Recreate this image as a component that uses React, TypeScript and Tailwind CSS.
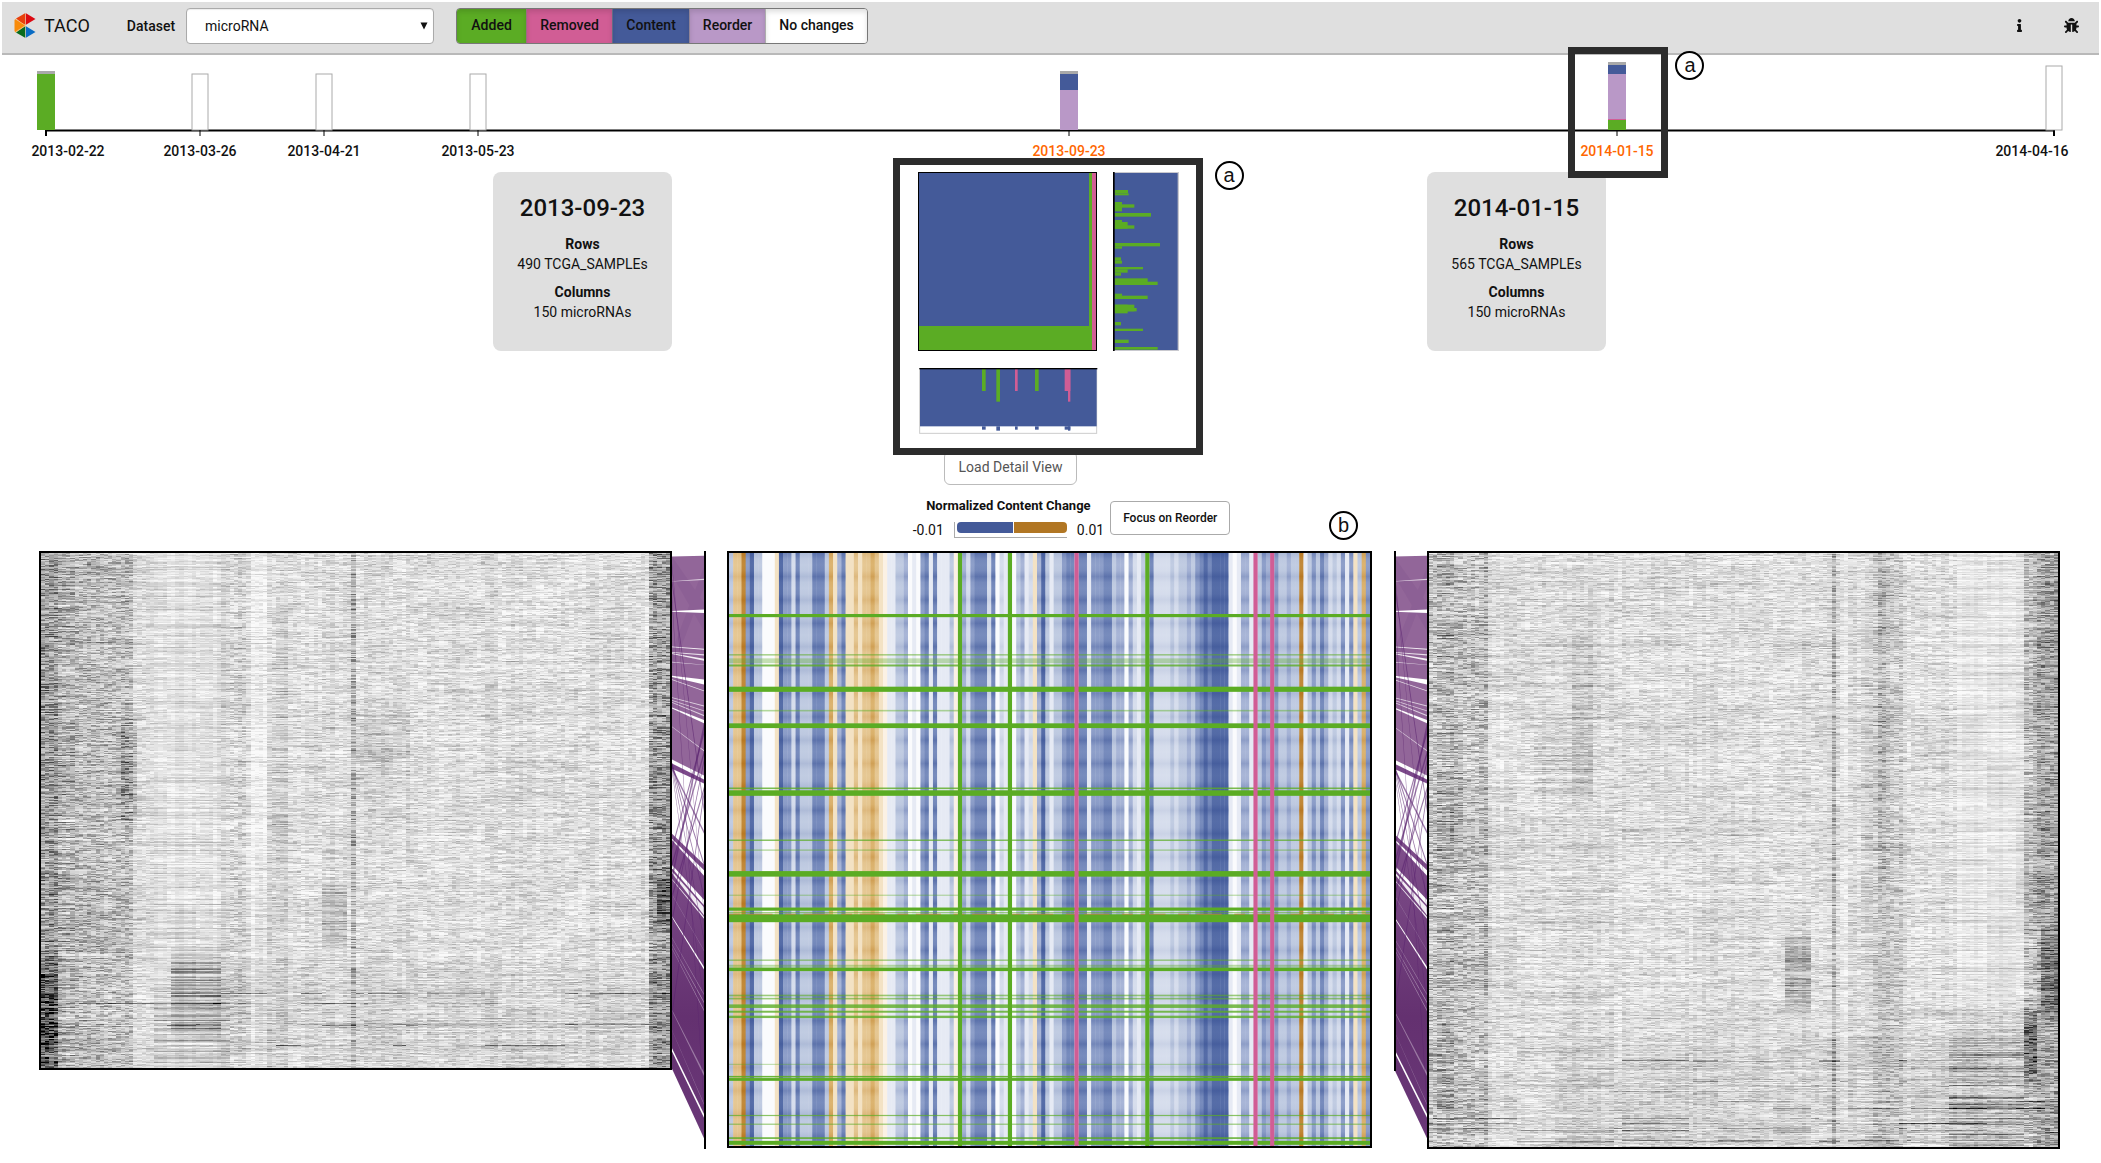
import { useLayoutEffect, useRef } from "react";
import { FaBug, FaInfo } from "react-icons/fa";

const GREEN = "#5bac24";
const PINK = "#d15d95";
const BLUE = "#445a99";
const PURPLE = "#b998c7";

/* ---------- Header ---------- */

function Logo() {
  return (
    <svg width="22" height="26" viewBox="0 0 22 26" aria-hidden="true">
      <path d="M11.500 0 L2 5.500 L8 10.500 L11.500 12 Z" fill="#e8400c" />
      <path d="M11.500 0 L21.500 6 L11.500 12 Z" fill="#dc0a12" />
      <path d="M0.500 7 L1.500 6 L11.500 12 L11.500 13 L1.500 19.500 L0.500 18 Z" fill="#f98b0a" />
      <path d="M11.500 13 L11.500 25 L2 19.500 Z" fill="#0a6b1c" />
      <path d="M11.500 13 L21.500 19 L11.500 25 Z" fill="#0a6cc4" />
      <path d="M11.500 0 V25 M1.500 6 L11.500 12.500 L1.500 19" stroke="#f3d9b0" strokeWidth="0.600" fill="none" />
    </svg>
  );
}

const FILTERS = [
  { label: "Added", style: "w-[69px] bg-[#5bac24]" },
  { label: "Removed", style: "w-[86px] bg-[#d15d95]" },
  { label: "Content", style: "w-[77px] bg-[#445a99]" },
  { label: "Reorder", style: "w-[76px] bg-[#b998c7]" },
  { label: "No changes", style: "w-[102px] bg-white" },
];

function Header() {
  return (
    <header className="flex h-[53px] items-center border-b-2 border-[#b9b9b9] bg-[#dfdfdf] pr-5 pb-1 pl-3">
      <a href="#home" className="flex items-center gap-2 text-lg">
        <Logo />
        TACO
      </a>
      <label htmlFor="dataset" className="ml-[37px] font-medium">
        Dataset
      </label>
      <div className="relative ml-[11px]">
        <select
          id="dataset"
          className="h-9 w-[248px] appearance-none rounded border border-[#aaa] bg-white pl-[18px] text-sm shadow-[inset_0_1px_1px_rgba(0,0,0,0.08)]"
        >
          <option>microRNA</option>
        </select>
        <svg className="pointer-events-none absolute top-3.5 right-1.5" width="8" height="8" viewBox="0 0 8 8" aria-hidden="true">
          <path d="M0.500 0.500 H7.500 L4 7.500 Z" fill="#111" />
        </svg>
      </div>
      <div className="ml-[22px] flex h-9 overflow-hidden rounded border border-[#777] font-medium">
        {FILTERS.map((f, i) => (
          <button
            key={f.label}
            type="button"
            className={`${f.style} ${i > 0 ? "border-l border-[#7779]" : ""} pb-px shadow-[inset_0_3px_5px_rgba(0,0,0,0.125)]`}
          >
            {f.label}
          </button>
        ))}
      </div>
      <nav className="ml-auto flex items-center gap-9">
        <button type="button" aria-label="Information" className="flex w-4 justify-center">
          <FaInfo size={13} />
        </button>
        <button type="button" aria-label="Report a bug" className="flex w-4 justify-center">
          <FaBug size={15} />
        </button>
      </nav>
    </header>
  );
}

/* ---------- Timeline ---------- */

type Seg = [number, number, string];
type Stop = { date: string; x: number; label: number; active?: boolean; top: number; segs: Seg[] };

const STOPS: Stop[] = [
  { date: "2013-02-22", x: 46, label: 68, top: 71, segs: [[71, 74, "#a9a9a9"], [74, 130, GREEN]] },
  { date: "2013-03-26", x: 200, label: 200, top: 74, segs: [] },
  { date: "2013-04-21", x: 324, label: 324, top: 74, segs: [] },
  { date: "2013-05-23", x: 478, label: 478, top: 74, segs: [] },
  { date: "2013-09-23", x: 1069, label: 1069, active: true, top: 71, segs: [[71, 74, "#a9a9a9"], [74, 90, BLUE], [90, 130, PURPLE]] },
  {
    date: "2014-01-15", x: 1617, label: 1617, active: true, top: 62,
    segs: [[62, 65, "#a9a9a9"], [65, 74, BLUE], [74, 119, PURPLE], [119, 120, PINK], [120, 130, GREEN]],
  },
  { date: "2014-04-16", x: 2054, label: 2032, top: 66, segs: [] },
];

function Timeline() {
  return (
    <section className="relative" aria-label="Timeline">
      <svg viewBox="2 55 2097 103" className="block w-full">
        <path d="M46 136 V130.500 H2054 V136" fill="none" stroke="#000" strokeWidth="2" />
        {STOPS.map((s) => (
          <g key={s.date}>
            {s.segs.length === 0 && (
              <rect x={s.x - 8} y={s.top} width="16" height={130 - s.top} fill="#fff" stroke="#aaa" strokeWidth="1" />
            )}
            {s.segs.map(([a, b, c]) => (
              <rect key={a} x={s.x - 9} y={a} width="18" height={b - a} fill={c} />
            ))}
            <path d={`M${s.x} 130 V136`} stroke="#000" strokeWidth="1" />
            <text x={s.label} y="156" textAnchor="middle" fontSize="14" fontWeight="500" fill={s.active ? "#ff6600" : "#111"}>
              {s.date}
            </text>
          </g>
        ))}
      </svg>
      <div className="pointer-events-none absolute -top-2 left-[74.700%] z-10 h-[131px] w-[100px] border-[7px] border-[#2c2c2c]">
        <Marker letter="a" place="top-[-3px] left-[100px]" />
      </div>
    </section>
  );
}

function Marker({ letter, place }: { letter: string; place: string }) {
  return (
    <span
      className={`${place} absolute flex size-[29px] items-center justify-center rounded-full border-2 border-black bg-white pb-0.5 font-['Liberation_Sans',sans-serif] text-xl leading-none`}
    >
      {letter}
    </span>
  );
}

/* ---------- Version cards ---------- */

function VersionCard({ date, rows, columns }: { date: string; rows: string; columns: string }) {
  return (
    <article className="mt-3.5 h-[179px] w-[179px] rounded-lg bg-[#dfdfdf] pt-5 text-center leading-5">
      <h2 className="mb-2.5 text-2xl leading-8 font-medium">{date}</h2>
      <h3 className="font-bold">Rows</h3>
      <p className="mb-2">{rows}</p>
      <h3 className="font-bold">Columns</h3>
      <p>{columns}</p>
    </article>
  );
}

/* ---------- Change overview ---------- */

/* [y, height, length] in thirds of a pixel */
const ROW_BARS = [
  [54, 10, 40], [64, 6, 42], [90, 28, 22], [97, 10, 59], [123, 11, 109], [144, 26, 22], [150, 20, 39], [160, 10, 59],
  [213, 10, 136], [223, 7, 22], [256, 10, 19], [266, 9, 22], [285, 7, 85], [292, 10, 39], [302, 9, 19], [319, 20, 99],
  [329, 10, 129], [365, 16, 22], [371, 10, 99], [398, 26, 39], [398, 20, 59], [408, 10, 66], [450, 10, 19], [470, 7, 85],
  [503, 10, 42], [525, 8, 129],
];

const COL_BARS: [number, number, number, string][] = [
  [186, 11, 66, GREEN], [229, 11, 98, GREEN], [285, 8, 66, PINK], [345, 11, 66, GREEN], [434, 17, 66, PINK], [444, 7, 98, PINK],
];

function Overview() {
  return (
    <div className="relative z-10 mr-1 h-[297px] w-[310px] border-[7px] border-[#2c2c2c] bg-white pt-[7px] pl-[18px]">
      <div className="grid grid-cols-[179px_66px] gap-x-4 gap-y-[17px]">
        <svg width="179" height="179" aria-label="Change matrix">
          <rect x="0" y="0" width="179" height="179" fill={BLUE} />
          <rect x="1" y="154" width="173" height="24" fill={GREEN} />
          <rect x="171" y="1" width="3" height="177" fill={GREEN} />
          <rect x="174" y="1" width="4" height="177" fill={PINK} />
          <rect x="0.500" y="0.500" width="178" height="178" fill="none" stroke="#000" />
        </svg>
        <svg width="66" height="179" viewBox="0 0 198 537" aria-label="Changes per row">
          <rect x="0" y="0" width="198" height="537" fill="#c9c9cf" />
          <rect x="0" y="3" width="194" height="531" fill={BLUE} />
          {ROW_BARS.map(([y, h, w], i) => (
            <rect key={i} x="5" y={y} width={w} height={h} fill={GREEN} />
          ))}
          <rect x="0" y="0" width="5" height="537" fill="#000" />
        </svg>
        <svg width="180" height="66" viewBox="0 0 540 198" aria-label="Changes per column">
          <rect x="5" y="2" width="531" height="194" fill="#fff" stroke="#ccc" strokeWidth="3" />
          <rect x="6" y="2" width="530" height="173" fill={BLUE} />
          {COL_BARS.map(([x, w, h, c]) => (
            <g key={x}>
              <rect x={x + 6} y="3" width={w} height={h} fill={c} />
              <rect x={x + 6} y="175" width={w} height={h > 70 ? 13 : 10} fill={BLUE} />
            </g>
          ))}
          <rect x="4" y="0" width="534" height="4" fill="#000" />
        </svg>
      </div>
      <Marker letter="a" place="-top-1 left-[315px]" />
    </div>
  );
}

function Legend() {
  return (
    <div className="relative flex h-16 items-start justify-center pt-3 pl-11">
      <div className="mr-1.5 pt-px">
        <p className="text-center text-[13px] leading-4 font-bold">Normalized Content Change</p>
        <div className="mt-2 flex items-center gap-2.5 leading-4">
          <span>-0.01</span>
          <span className="flex border-b border-l border-[#aaa] pb-1 pl-0.5">
            <span className="h-[11px] w-14 rounded-l bg-[#445a99]" />
            <span className="h-[11px] w-[54px] rounded-r border-l border-white bg-[#b17623]" />
          </span>
          <span>0.01</span>
        </div>
      </div>
      <button type="button" className="mt-1 h-[34px] rounded border border-[#aaa] px-3 text-xs font-medium">
        Focus on Reorder
      </button>
      <Marker letter="b" place="right-3.5 top-[26px]" />
    </div>
  );
}

/* ---------- Grey expression matrices ---------- */

/* [x0, x1, y0, y1, darkness, cell noise, shared row noise], positions as fractions */
type Region = [number, number, number, number, number, number, number];

const SOURCE: Region[] = [
  [0, 1, -0.1, 1.2, 0.03, 0.09, 0.03],
  [0, 0.15, -0.1, 1.2, 0.03, 0.08, 0.02],
  [0, 0.025, -0.1, 1.2, 0.06, 0.04, 0.05],
  [0, 0.03, 0.77, 1.2, 0.06, 0.14, 0.15],
  [0.028, 0.055, -0.1, 1.2, -0.02, -0.02, 0.13],
  [0.13, 0.155, 0.3, 0.55, 0.02, 0.06, 0.06],
  [0.17, 0.3, -0.1, 1.2, 0, -0.05, 0.06],
  [0.21, 0.29, 0.76, 0.95, 0.04, 0, 0.2],
  [0.18, 0.3, 0.8, 1.2, 0, 0, 0.12],
  [0.29, 0.33, -0.1, 1.2, 0.01, 0.03, 0],
  [0.335, 0.36, -0.1, 1.2, -0.03, -0.03, 0],
  [0.37, 0.395, 0.08, 0.62, 0.02, -0.03, 0.11],
  [0.34, 0.395, 0.5, 1.1, 0.01, 0, 0.05],
  [0.45, 0.486, 0.63, 0.78, 0.08, -0.02, 0.13],
  [0.496, 0.502, -0.1, 1.2, 0.07, 0.1, 0],
  [0.5, 0.59, 0.28, 0.46, 0.01, 0, 0.08],
  [0.3, 1, 0.78, 1.2, 0.01, 0, 0.05],
  [0.965, 1, -0.1, 1.2, 0.07, 0.13, 0.04],
  [0.98, 1, 0.62, 0.74, 0.14, 0, 0.14],
];

const TARGET: Region[] = [
  [0, 1, -0.1, 1.2, 0.03, 0.09, 0.03],
  [0, 0.09, -0.1, 1.2, 0.02, 0.08, 0.02],
  [0.015, 0.04, -0.1, 1.2, -0.02, -0.02, 0.15],
  [0.035, 0.055, 0.26, 0.52, 0.04, 0, 0.06],
  [0.085, 0.095, -0.1, 1.2, 0.04, 0.1, 0],
  [0.23, 0.26, 0.1, 0.45, 0.02, 0, 0.06],
  [0.17, 0.26, 0.28, 0.42, 0.01, 0, 0.08],
  [0.57, 0.61, 0.63, 0.78, 0.09, 0, 0.14],
  [0.641, 0.647, -0.1, 1.2, 0.05, 0.08, 0],
  [0.655, 0.67, -0.1, 1.2, -0.02, -0.03, 0],
  [0.685, 0.708, 0.06, 0.74, 0.02, -0.02, 0.09],
  [0.71, 0.755, -0.1, 1.2, 0.02, 0.04, 0.02],
  [0.715, 0.73, -0.1, 0.6, 0.04, 0.03, 0],
  [0.84, 0.95, -0.1, 0.79, 0, -0.05, 0.05],
  [0.83, 0.95, 0.76, 1.2, 0.04, 0, 0.2],
  [0.2, 0.83, 0.78, 1.2, 0.01, 0, 0.05],
  [0.95, 0.97, -0.1, 1.2, 0.03, 0.07, 0.05],
  [0.945, 0.965, 0.76, 0.9, 0.14, 0.08, 0.12],
  [0.97, 1, -0.1, 1.2, 0.08, 0.09, 0.07],
  [0.975, 1, 0.62, 0.8, 0.12, 0, 0.1],
];

function random(seed: number) {
  let s = seed;
  return () => {
    s = (s + 0x6d2b79f5) | 0;
    let t = Math.imul(s ^ (s >>> 15), 1 | s);
    t = (t + Math.imul(t ^ (t >>> 7), 61 | t)) ^ t;
    return ((t ^ (t >>> 14)) >>> 0) / 4294967296;
  };
}

/* Fades a region in and out over the first and last fifth of its height. */
function fade(y: number, y0: number, y1: number) {
  if (y <= y0 || y >= y1) return 0;
  return Math.min(1, (5 * Math.min(y - y0, y1 - y)) / Math.min(y1 - y0, 0.4));
}

function ExpressionMatrix({ rows, regions, seed, height }: { rows: number; regions: Region[]; seed: number; height: string }) {
  const ref = useRef<HTMLCanvasElement>(null);
  useLayoutEffect(() => {
    const ctx = ref.current?.getContext("2d");
    if (!ctx) return;
    const cols = 150;
    const rnd = random(seed);
    const image = ctx.createImageData(cols, rows);
    const colShift = Array.from({ length: cols }, () => (rnd() - 0.5) * 0.05);
    let group = 0;
    const groupOf = Array.from({ length: cols }, () => (rnd() < 0.15 ? ++group : group));
    const drift = Array.from({ length: group + 1 }, () => 0);
    let previous = 0;
    for (let y = 0; y < rows; y++) {
      const fy = y / rows;
      const shared = regions.map(() => rnd() ** 2.5 * 2);
      const streak = fy > 0.85 && rnd() < 0.1 ? 0.4 : 0;
      const groupRow = drift.map(() => rnd() ** 3 * 0.1 + (rnd() < 0.4 ? streak * rnd() : 0));
      drift.forEach((d, i) => {
        drift[i] = d * 0.95 + (rnd() - 0.5) * 0.014;
      });
      for (let x = 0; x < cols; x++) {
        let base = colShift[x] + drift[groupOf[x]] + groupRow[groupOf[x]];
        let cell = 0;
        let row = 0;
        const fx = (x + 0.5) / cols;
        regions.forEach(([x0, x1, y0, y1, d, n, r], i) => {
          if (fx < x0 || fx >= x1) return;
          const k = fade(fy, y0, y1);
          base += d * k;
          cell += n * k;
          row += r * k * shared[i];
        });
        const noise = rnd() ** 2 * 2.4;
        previous = previous * 0.35 + noise * 0.65;
        const v = Math.max(0.02, Math.min(1, base - 0.03 + Math.max(0.03, cell) * previous * 1.3 + row));
        const g = 255 * (1 - v);
        const o = (y * cols + x) * 4;
        image.data[o] = g;
        image.data[o + 1] = g;
        image.data[o + 2] = g;
        image.data[o + 3] = 255;
      }
    }
    ctx.putImageData(image, 0, 0);
  }, [rows, regions, seed]);
  return <canvas ref={ref} width={150} height={rows} className={`${height} block w-full border-2 border-black [image-rendering:pixelated]`} />;
}

/* ---------- Difference matrix ---------- */

const CHANGE_COLORS: Record<string, string> = {
  ".": "#fafbfd",
  a: "#e6eaf4",
  b: "#d7deed",
  c: "#c1cce2",
  d: "#a9b6d7",
  e: "#8fa0ca",
  f: "#788cbd",
  g: "#566da8",
  "1": "#fbf1e4",
  "2": "#f3e2c4",
  "3": "#e6c894",
  "4": "#dcb470",
  "5": "#c28a3a",
};

const BAND_STRENGTH: Record<string, number> = { b: 0.15, c: 0.25, d: 0.45, e: 0.6, f: 0.8, g: 1, "3": 0.3, "4": 0.5, "5": 1 };

const CHANGE_COLUMNS =
  "c335egcc...2geebfcccfffc42df22323343" +
  "21aaccd.a.efafaaac1Gdbefffbf.baG.cdab2dgcacceffP" +
  "ffaeeeffcdd.dbacGfbbbbcbccdcefgfgggg" +
  "a.addaPcedPeccdcc5acecfdbcbeae2c4e";

const ADDED_ROWS = [
  [158, 8, 1], [257, 4, 0.5], [272, 12, 0.35], [284, 5, 0.8], [344, 13, 1], [398, 4, 0.45], [436, 12, 1], [594, 4, 0.8],
  [606, 14, 1], [725, 3, 0.9], [750, 3, 0.5], [810, 14, 1], [864, 3, 0.4], [899, 8, 1], [908, 3, 0.6], [922, 20, 1],
  [1028, 4, 0.5], [1042, 5, 0.4], [1051, 9, 1], [1117, 4, 0.6], [1125, 4, 0.6], [1144, 9, 0.8], [1158, 5, 0.8],
  [1171, 6, 0.8], [1291, 3, 0.35], [1322, 4, 0.9], [1329, 7, 1], [1420, 3, 0.7], [1442, 3, 0.6], [1477, 4, 0.9], [1489, 10, 1],
];

function BandGradient({ id, color }: { id: string; color: string }) {
  return (
    <linearGradient id={id} gradientUnits="userSpaceOnUse" x1="0" y1="30" x2="0" y2="89" spreadMethod="repeat">
      <stop offset="0" stopColor={color} stopOpacity="0" />
      <stop offset="0.250" stopColor={color} stopOpacity="0.100" />
      <stop offset="0.500" stopColor={color} stopOpacity="0.550" />
      <stop offset="0.750" stopColor={color} stopOpacity="0.100" />
      <stop offset="1" stopColor={color} stopOpacity="0" />
    </linearGradient>
  );
}

function DifferenceMatrix() {
  const cols = CHANGE_COLUMNS.split("");
  const at = (c: string) => cols.flatMap((v, i) => (v === c ? [i] : []));
  const w = 1530 / cols.length;
  return (
    <svg viewBox="0 0 1530 1497" preserveAspectRatio="none" className="block h-[597px] w-full border-2 border-black" aria-label="Difference matrix">
      <defs>
        <BandGradient id="blue-bands" color="#3a5295" />
        <BandGradient id="orange-bands" color="#b06a10" />
      </defs>
      {cols.map((c, i) => (
        <rect key={i} x={i * w} y="0" width={w + 1} height="1497" fill={CHANGE_COLORS[c] ?? "#dfe4f0"} />
      ))}
      {cols.map((c, i) =>
        BAND_STRENGTH[c] ? (
          <rect
            key={i}
            x={i * w}
            y="0"
            width={w}
            height="1497"
            fill={"345".includes(c) ? "url(#orange-bands)" : "url(#blue-bands)"}
            opacity={BAND_STRENGTH[c]}
          />
        ) : null,
      )}
      {ADDED_ROWS.map(([y, h, o]) => (
        <rect key={y} x="0" y={y - h / 2} width="1530" height={h} fill={GREEN} opacity={o} />
      ))}
      <path d="M0 912 H1530" stroke="#a58a3a" strokeWidth="3" strokeDasharray="26 18 60 30" />
      {at("G").map((i) => (
        <rect key={i} x={i * w} y="0" width={w} height="1497" fill={GREEN} />
      ))}
      {at("P").map((i) => (
        <rect key={i} x={i * w} y="0" width={w} height="1497" fill={PINK} />
      ))}
    </svg>
  );
}

/* ---------- Row reorder slopes ---------- */

/* [left y, right y, left thickness, right thickness, opacity] */
const GAPS = [
  [76, 71, 1, 3, 0.7], [151, 151, 2, 9, 1], [240, 246, 2, 3, 0.9], [254, 260, 2, 3, 0.8], [257, 272, 2, 5, 0.9],
  [278, 285, 2, 1, 0.7], [314, 328, 3, 13, 1], [322, 350, 2, 2, 0.8], [367, 388, 2, 2, 0.7], [374, 400, 2, 2, 0.7],
  [379, 412, 2, 3, 0.7], [393, 427, 3, 8, 1], [440, 500, 1, 2, 0.7], [722, 806, 3, 14, 1], [790, 880, 8, 14, 1],
  [804, 902, 5, 20, 0.9], [822, 918, 2, 5, 0.9], [916, 1044, 3, 7, 1], [968, 1110, 1, 3, 0.4], [985, 1130, 1, 3, 0.5],
  [995, 1150, 1, 3, 0.5], [860, 1000, 1, 1, 0.4], [1150, 1310, 3, 9, 0.35], [1200, 1385, 1, 2, 0.4], [1249, 1414, 8, 9, 1],
];

const CROSSINGS = [
  [70, 640, 7], [110, 1380, 9], [30, 900, 5], [530, 780, 4], [530, 860, 4], [545, 1120, 4], [540, 700, 4], [535, 970, 4],
  [810, 430, 9], [780, 500, 6], [860, 590, 5], [1150, 600, 7], [920, 520, 5], [740, 450, 5],
];

function Slopes() {
  return (
    <svg viewBox="0 0 98 1497" preserveAspectRatio="none" className="block h-[598px] w-full" aria-label="Row reordering">
      <defs>
        <linearGradient id="lower" x1="0" y1="0" x2="0" y2="1">
          <stop offset="0" stopColor="#80508c" />
          <stop offset="0.600" stopColor="#643170" />
          <stop offset="1" stopColor="#6a3878" />
        </linearGradient>
      </defs>
      <path d="M0 14 L98 12 V562 L0 522 Z" fill="#926699" />
      <path d="M0 14 L98 130 V200 L0 60 Z M0 250 L98 40 V90 L0 300 Z" fill="#4f1f62" opacity="0.080" />
      <path d="M0 532 L98 572 V582 L0 545 Z" fill="#7c4a8a" />
      <path d="M0 708 L98 785 V1470 L0 1296 Z" fill="url(#lower)" />
      {GAPS.map(([l, r, a, b, o], i) => (
        <path key={i} d={`M0 ${l - a / 2} L98 ${r - b / 2} V${r + b / 2} L0 ${l + a / 2} Z`} fill="#fff" opacity={o} />
      ))}
      {CROSSINGS.map(([l, r, t], i) => (
        <path key={i} d={`M0 ${l} L98 ${r} v${t * 2} L0 ${l + t * 2} Z`} fill="#5a2370" opacity="0.600" />
      ))}
    </svg>
  );
}

/* ---------- Page ---------- */

const COLUMNS = "grid grid-cols-[633fr_34fr_21fr_645fr_22fr_33fr_633fr]";

export default function App() {
  return (
    <div className="bg-white px-0.5 pt-0.5 pb-3 font-[Roboto,sans-serif] text-sm text-[#111]">
      <Header />
      <Timeline />
      <main className="pr-[39px] pl-[37px]">
        <div className={COLUMNS}>
          <div className="col-start-1 flex justify-end">
            <VersionCard date="2013-09-23" rows="490 TCGA_SAMPLEs" columns="150 microRNAs" />
          </div>
          <div className="col-start-4">
            <div className="flex flex-col items-center">
              <Overview />
              <button
                type="button"
                className="-mt-1 mr-[78px] h-[34px] rounded-md border border-[#bbb] px-3.5 pb-[3px] text-[#555]"
              >
                Load Detail View
              </button>
            </div>
            <Legend />
          </div>
          <div className="col-start-7">
            <VersionCard date="2014-01-15" rows="565 TCGA_SAMPLEs" columns="150 microRNAs" />
          </div>
        </div>
        <div className={`${COLUMNS} items-start pt-0.5`}>
          <ExpressionMatrix rows={490} regions={SOURCE} seed={11} height="h-[519px]" />
          <div className="border-r-2 border-black">
            <Slopes />
          </div>
          <div className="col-start-4">
            <DifferenceMatrix />
          </div>
          <div className="relative col-start-6">
            <div className="absolute inset-y-0 left-0 w-0.5 bg-linear-to-b from-black from-[87%] to-transparent to-[87%]" />
            <Slopes />
          </div>
          <ExpressionMatrix rows={565} regions={TARGET} seed={29} height="h-[598px]" />
        </div>
      </main>
    </div>
  );
}
